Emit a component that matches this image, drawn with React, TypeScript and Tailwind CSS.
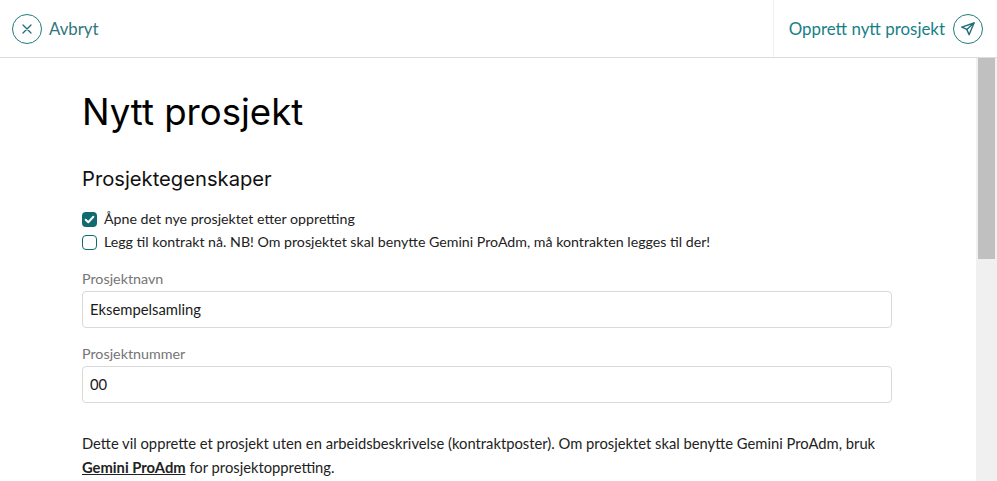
import React from "react";

const body = "font-['Lato','Noto_Sans',sans-serif]";
const head = "font-['Inter','Liberation_Sans',sans-serif]";

function Field({ label, value }: { label: string; value: string }) {
  return (
    <div className="flex flex-col">
      <label className="h-[23px] pt-[1px] text-[14.3px] leading-[20px] text-[#757575]">{label}</label>
      <div className="flex h-[37px] w-[810px] items-center rounded-[4px] border border-[#d9d9d9] px-[7px] text-[14.8px] text-[#1a1a1a]">
        {value}
      </div>
    </div>
  );
}

export default function App() {
  return (
    <div className={`flex h-[481px] w-[997px] flex-col overflow-hidden bg-white ${body}`}>
      <header className="flex h-[58px] shrink-0 items-center justify-between border-b border-[#dcdcdc]">
        <div className="flex items-center gap-[7px] pl-[12px] text-[#2f7680]">
          <span className="flex h-[30px] w-[30px] items-center justify-center rounded-full border border-[#1f7a7a]">
            <svg width="12" height="12" viewBox="0 0 12 12" fill="none" stroke="#1f6f78" strokeWidth="1.3" strokeLinecap="round">
              <path d="M2 2l8 8M10 2l-8 8" />
            </svg>
          </span>
          <span className="text-[16.8px]">Avbryt</span>
        </div>
        <div className="flex h-full items-center gap-[8px] border-l border-[#f0f0f0] pl-[15px] pr-[14px] text-[#177f86]">
          <span className="text-[16.9px]">Opprett nytt prosjekt</span>
          <span className="flex h-[30px] w-[30px] items-center justify-center rounded-full border border-[#1f7a7a]">
            <svg width="16" height="16" viewBox="0 0 16 16" fill="none" stroke="#1f6f78" strokeWidth="1.4" strokeLinejoin="round" strokeLinecap="round">
              <path d="M14 2L1.8 6.2l5 2.2 2.3 5.3L14 2z" />
              <path d="M6.8 8.4L14 2" />
            </svg>
          </span>
        </div>
      </header>
      <div className="flex min-h-0 flex-1">
        <main className="min-w-0 flex-1 pl-[82px] pt-[32px]">
          <h1 className={`text-[36.6px] leading-[44px] text-black ${head}`}>Nytt prosjekt</h1>
          <h2 className={`mt-[31px] text-[20.2px] leading-[28px] text-[#111] ${head}`}>Prosjektegenskaper</h2>
          <div className="mt-[16px] flex flex-col gap-[3px] text-[14.2px] leading-[20px] text-[#222]">
            <div className="flex items-center gap-[7px]">
              <span className="flex h-[15px] w-[15px] items-center justify-center rounded-[4px] bg-[#0f6b70]">
                <svg width="11" height="11" viewBox="0 0 10 10" fill="none" stroke="#fff" strokeWidth="1.8" strokeLinecap="round" strokeLinejoin="round">
                  <path d="M1.5 5.2l2.4 2.3 4.6-5" />
                </svg>
              </span>
              <span>Åpne det nye prosjektet etter oppretting</span>
            </div>
            <div className="flex items-center gap-[7px]">
              <span className="h-[15px] w-[15px] rounded-[4px] border-[1.5px] border-[#0f6b70]" />
              <span>Legg til kontrakt nå. NB! Om prosjektet skal benytte Gemini ProAdm, må kontrakten legges til der!</span>
            </div>
          </div>
          <div className="mt-[16px] flex flex-col gap-[15px]">
            <Field label="Prosjektnavn" value="Eksempelsamling" />
            <Field label="Prosjektnummer" value="00" />
          </div>
          <p className="mt-[28px] w-[810px] text-[14.75px] leading-[24px] text-[#222]">
            Dette vil opprette et prosjekt uten en arbeidsbeskrivelse (kontraktposter). Om prosjektet skal benytte Gemini ProAdm, bruk{" "}
            <a className="font-bold underline">Gemini ProAdm</a> for prosjektoppretting.
          </p>
        </main>
        <div className="w-[21px] shrink-0 bg-[#f0f0f0] pl-[2px]">
          <div className="h-[201px] w-[17px] bg-[#c0c0c0]" />
        </div>
      </div>
    </div>
  );
}
